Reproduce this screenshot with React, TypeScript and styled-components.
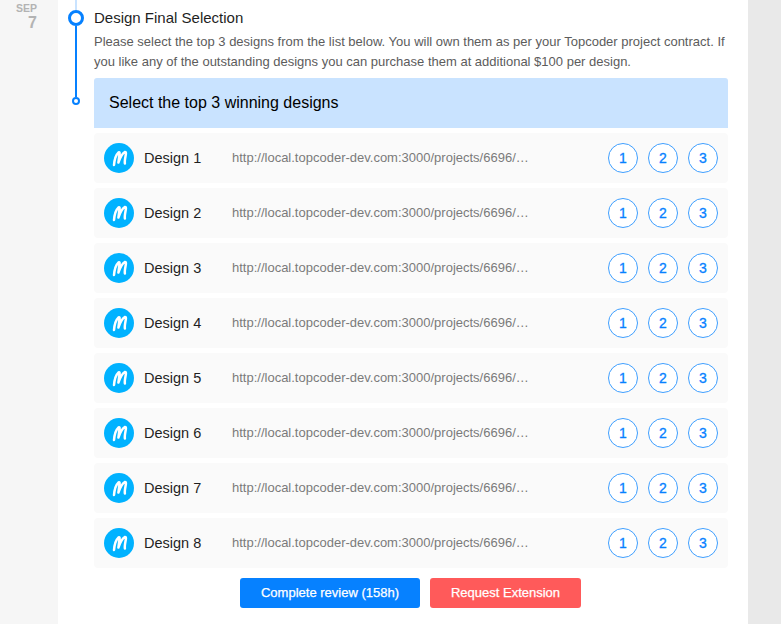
import { createGlobalStyle, styled } from 'styled-components'

const designs = [1, 2, 3, 4, 5, 6, 7, 8]
const url = 'http://local.topcoder-dev.com:3000/projects/6696/…'

const GlobalStyle = createGlobalStyle`
  html, body {
    margin: 0;
    padding: 0;
    background: #e9e9e9;
  }
  * {
    box-sizing: border-box;
  }
`

const Page = styled.div`
  display: flex;
  width: 781px;
  height: 624px;
  overflow: hidden;
  background: #e9e9e9;
  font-family: 'Liberation Sans', Arial, sans-serif;
`
const DateCol = styled.div`
  width: 58px;
  flex-shrink: 0;
  background: #f6f6f6;
  padding-top: 2px;
  padding-right: 21px;
  display: flex;
  flex-direction: column;
  align-items: flex-end;
  color: #b3b3b3;
  font-weight: 700;
`
const Month = styled.div`
  font-size: 10.5px;
  line-height: 12px;
`
const Day = styled.div`
  font-size: 16px;
  line-height: 18px;
`
const Card = styled.div`
  width: 690px;
  flex-shrink: 0;
  background: #fff;
  display: flex;
`
const Timeline = styled.div`
  width: 36px;
  flex-shrink: 0;
  display: flex;
  flex-direction: column;
  align-items: center;
`
const TopLine = styled.div`
  width: 2px;
  height: 10px;
  background: #c9e3ff;
`
const BigDot = styled.div`
  width: 16px;
  height: 16px;
  border-radius: 50%;
  border: 3px solid #0681ff;
  background: #fff;
`
const Line = styled.div`
  width: 2px;
  height: 71px;
  background: #0681ff;
`
const SmallDot = styled.div`
  width: 8px;
  height: 8px;
  border-radius: 50%;
  border: 2px solid #0681ff;
  background: #fff;
`
const Content = styled.div`
  width: 634px;
  padding-top: 9px;
`
const Title = styled.h3`
  margin: 0;
  font-size: 15px;
  line-height: 18px;
  font-weight: 400;
  color: #1f1f1f;
`
const Description = styled.p`
  margin: 5px 0 6px;
  font-size: 13px;
  line-height: 20px;
  color: #5c5c5c;
  white-space: nowrap;
`
const Banner = styled.div`
  height: 50px;
  padding-left: 15px;
  display: flex;
  align-items: center;
  background: #c9e3ff;
  border-radius: 3px 3px 0 0;
  font-size: 16px;
  color: #000;
`
const List = styled.div`
  margin-top: 5px;
  display: flex;
  flex-direction: column;
  gap: 5px;
`
const Row = styled.div`
  height: 50px;
  padding: 0 10px;
  display: flex;
  align-items: center;
  background: #fafafa;
  border-radius: 4px;
`
const Avatar = styled.svg`
  width: 30px;
  height: 30px;
  flex-shrink: 0;
`
const Name = styled.div`
  width: 88px;
  margin-left: 10px;
  font-size: 14.5px;
  color: #1f1f1f;
`
const Link = styled.div`
  font-size: 13px;
  line-height: 15px;
  margin-top: -1px;
  color: #7a7a7a;
  white-space: nowrap;
`
const Ranks = styled.div`
  margin-left: auto;
  display: flex;
  gap: 10px;
`
const Rank = styled.button`
  width: 30px;
  height: 30px;
  padding: 0;
  border-radius: 50%;
  border: 1px solid #3f9fff;
  background: #fff;
  color: #0681ff;
  font-family: inherit;
  font-size: 14px;
  -webkit-text-stroke: 0.3px #0681ff;
`
const Actions = styled.div`
  margin-top: 10px;
  display: flex;
  justify-content: center;
  gap: 10px;
  padding-right: 1px;
`
const ActionButton = styled.button<{ $color: string; $width: number }>`
  width: ${p => p.$width}px;
  height: 30px;
  padding: 0 0 2px;
  border: none;
  border-radius: 3px;
  background: ${p => p.$color};
  color: #fff;
  font-family: inherit;
  font-size: 13px;
  -webkit-text-stroke: 0.25px #fff;
`
const Gutter = styled.div`
  flex: 1;
`

function Logo() {
  return (
    <Avatar viewBox="0 0 30 30">
      <circle cx="15" cy="15" r="15" fill="#00b2ff" />
      <path
        d="M10 22 C10.4 17 11.8 12 14.6 9.4 C15.8 8.7 15.8 10.4 15.3 12.6 L14.4 19.6 C16 15 18 10.6 20.8 9 C22.3 8.6 22 11 21.6 12.8 C21.1 15.5 20.5 18.4 20.9 20.4"
        fill="none"
        stroke="#fff"
        strokeWidth="2.5"
        strokeLinecap="round"
        strokeLinejoin="round"
      />
    </Avatar>
  )
}

export default function App() {
  return (
    <Page>
      <GlobalStyle />
      <DateCol>
        <Month>SEP</Month>
        <Day>7</Day>
      </DateCol>
      <Card>
        <Timeline>
          <TopLine />
          <BigDot />
          <Line />
          <SmallDot />
        </Timeline>
        <Content>
          <Title>Design Final Selection</Title>
          <Description>
            Please select the top 3 designs from the list below. You will own them as per your Topcoder project contract. If
            <br />
            you like any of the outstanding designs you can purchase them at additional $100 per design.
          </Description>
          <Banner>Select the top 3 winning designs</Banner>
          <List>
            {designs.map(n => (
              <Row key={n}>
                <Logo />
                <Name>Design {n}</Name>
                <Link>{url}</Link>
                <Ranks>
                  <Rank>1</Rank>
                  <Rank>2</Rank>
                  <Rank>3</Rank>
                </Ranks>
              </Row>
            ))}
          </List>
          <Actions>
            <ActionButton $color="#0681ff" $width={180}>Complete review (158h)</ActionButton>
            <ActionButton $color="#ff5a5a" $width={151}>Request Extension</ActionButton>
          </Actions>
        </Content>
        <Gutter />
      </Card>
    </Page>
  )
}
